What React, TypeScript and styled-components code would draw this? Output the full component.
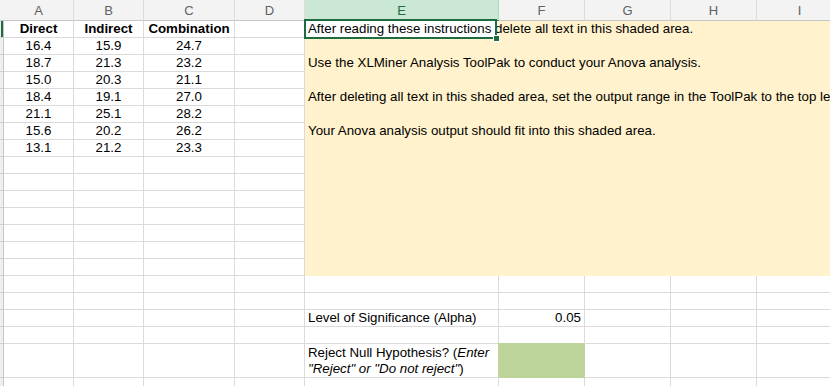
import React from 'react';
import styled, { createGlobalStyle } from 'styled-components';

const GlobalStyle = createGlobalStyle`
  html, body {
    margin: 0;
    padding: 0;
    background: #fff;
  }
`;

const GRID = '#dadada';
const EXCEL_GREEN = '#1e6c41';

const Viewport = styled.div`
  width: 830px;
  height: 386px;
  overflow: hidden;
  font-family: 'Liberation Sans', Arial, sans-serif;
  font-size: 13.3px;
  color: #000;
`;

const Sheet = styled.div`
  position: relative;
  display: grid;
  grid-template-columns: 4px 70px 70px 91px 70px 194px 86px 86px 86px 86px;
  grid-template-rows: 21px repeat(19, 17px) 34px 17px;
  width: max-content;
`;

const Corner = styled.div`
  background: #f3f3f3;
  border-bottom: 1px solid #c6c6c6;
`;

const ColHead = styled.div<{ $active?: boolean }>`
  box-sizing: border-box;
  padding-top: 2px;
  line-height: 18px;
  text-align: center;
  font-size: 13px;
  background: ${(p) => (p.$active ? '#cae8d5' : '#f3f3f3')};
  color: ${(p) => (p.$active ? EXCEL_GREEN : '#616161')};
  border-right: 1px solid ${(p) => (p.$active ? '#a9d8bc' : '#dcdcdc')};
  border-bottom: 1px solid ${(p) => (p.$active ? EXCEL_GREEN : '#c6c6c6')};
`;

const RowHead = styled.div<{ $active?: boolean }>`
  box-sizing: border-box;
  background: #efefef;
  border-right: 1px solid #c6c6c6;
  border-bottom: 1px solid #d0d0d0;
  box-shadow: ${(p) => (p.$active ? `inset -2px 0 0 ${EXCEL_GREEN}` : 'none')};
`;

const Cell = styled.div<{ $align?: 'left' | 'center' | 'right'; $bold?: boolean; $fill?: string }>`
  box-sizing: border-box;
  padding: 0 3px;
  line-height: 16px;
  white-space: nowrap;
  overflow: hidden;
  text-align: ${(p) => p.$align || 'left'};
  font-weight: ${(p) => (p.$bold ? 700 : 400)};
  background: ${(p) => p.$fill || 'transparent'};
  border-right: 1px solid ${(p) => p.$fill || GRID};
  border-bottom: 1px solid ${(p) => p.$fill || GRID};
  box-shadow: ${(p) => (p.$fill ? `-1px -1px 0 ${p.$fill}` : 'none')};
`;

const WrapCell = styled(Cell)`
  white-space: normal;
  padding-top: 1px;
`;

const Shaded = styled.div`
  grid-column: 6 / 11;
  grid-row: 2 / span 15;
  background: #fff2cc;
  display: flex;
  flex-direction: column;
`;

const NoteLine = styled.div<{ $selected?: boolean }>`
  height: 17px;
  line-height: 16px;
  padding: 0 3px;
  white-space: nowrap;
  background: ${(p) =>
    p.$selected ? 'linear-gradient(to right, #fff 0 193px, transparent 193px)' : 'transparent'};
`;

const Selection = styled.div`
  position: absolute;
  left: 304px;
  top: 19px;
  width: 193px;
  height: 20px;
  box-sizing: border-box;
  border: 2px solid ${EXCEL_GREEN};
  pointer-events: none;
`;

const Handle = styled.div`
  position: absolute;
  right: -5px;
  bottom: -5px;
  width: 5px;
  height: 5px;
  background: ${EXCEL_GREEN};
  border: 1px solid #fff;
`;

const columns = ['A', 'B', 'C', 'D', 'E', 'F', 'G', 'H', 'I'];

const data: string[][] = [
  ['16.4', '15.9', '24.7'],
  ['18.7', '21.3', '23.2'],
  ['15.0', '20.3', '21.1'],
  ['18.4', '19.1', '27.0'],
  ['21.1', '25.1', '28.2'],
  ['15.6', '20.2', '26.2'],
  ['13.1', '21.2', '23.3'],
];

const notes = [
  'After reading these instructions delete all text in this shaded area.',
  '',
  'Use the XLMiner Analysis ToolPak to conduct your Anova analysis.',
  '',
  'After deleting all text in this shaded area, set the output range in the ToolPak to the top left cell of this shaded area.',
  '',
  'Your Anova analysis output should fit into this shaded area.',
];

const ROWS = 21;

const App = () => {
  const rows: React.ReactNode[] = [];

  for (let r = 1; r <= ROWS; r++) {
    rows.push(<RowHead key={`h${r}`} $active={r === 1} />);

    // columns A-C
    if (r === 1) {
      rows.push(
        <Cell key={`a${r}`} $align="center" $bold>Direct</Cell>,
        <Cell key={`b${r}`} $align="center" $bold>Indirect</Cell>,
        <Cell key={`c${r}`} $align="center" $bold>Combination</Cell>
      );
    } else {
      const vals = data[r - 2] || ['', '', ''];
      vals.forEach((v, i) => rows.push(<Cell key={`${i}-${r}`} $align="center">{v}</Cell>));
    }
    rows.push(<Cell key={`d${r}`} />);

    if (r === 1) {
      rows.push(
        <Shaded key="shaded">
          {Array.from({ length: 15 }).map((_, i) => (
            <NoteLine key={i} $selected={i === 0}>{notes[i] || ''}</NoteLine>
          ))}
        </Shaded>
      );
    } else if (r > 15) {
      if (r === 18) {
        rows.push(
          <Cell key={`e${r}`}>Level of Significance (Alpha)</Cell>,
          <Cell key={`f${r}`} $align="right">0.05</Cell>
        );
      } else if (r === 20) {
        rows.push(
          <WrapCell key={`e${r}`}>
            Reject Null Hypothesis? (<em>Enter "Reject" or "Do not reject"</em>)
          </WrapCell>,
          <Cell key={`f${r}`} $fill="#bdd59a" />
        );
      } else {
        rows.push(<Cell key={`e${r}`} />, <Cell key={`f${r}`} />);
      }
      rows.push(<Cell key={`g${r}`} />, <Cell key={`hh${r}`} />, <Cell key={`i${r}`} />);
    }
  }

  return (
    <Viewport>
      <GlobalStyle />
      <Sheet>
        <Corner />
        {columns.map((c) => (
          <ColHead key={c} $active={c === 'E'}>{c}</ColHead>
        ))}
        {rows}
        <Selection>
          <Handle />
        </Selection>
      </Sheet>
    </Viewport>
  );
};

export default App;
